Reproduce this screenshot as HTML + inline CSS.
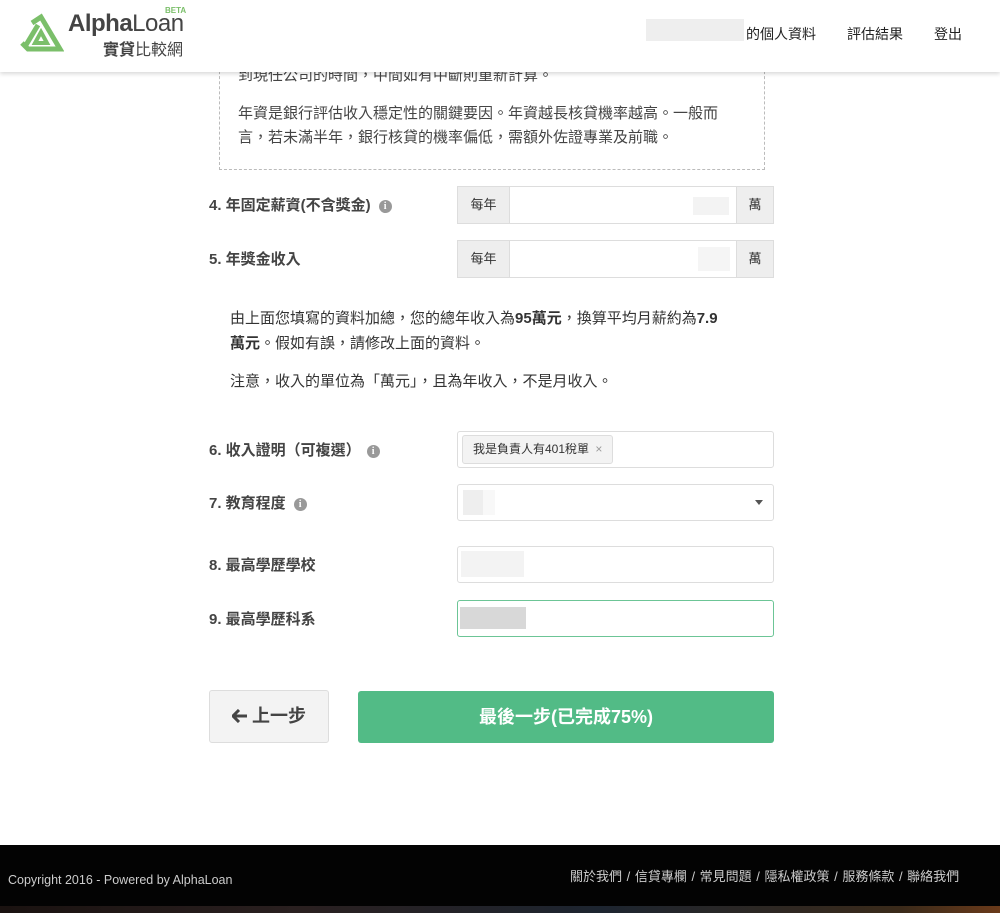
<!DOCTYPE html>
<html><head><meta charset="utf-8"><style>
*{box-sizing:border-box;margin:0;padding:0}
body{width:1000px;height:913px;position:relative;background:#fff;font-family:"Liberation Sans","Noto Sans CJK TC",sans-serif;color:#333;overflow:hidden}
.abs{position:absolute}
.hdr{left:0;top:0;width:1000px;height:72px;background:#fff;box-shadow:0 2px 4px rgba(0,0,0,.15);z-index:5}
.nav{font-size:14px;color:#222;top:24px}
.box{left:219px;top:56px;width:546px;height:114px;border:1px dashed #bbb;border-top:none;font-size:15px;color:#444;line-height:24px;padding:0 18px}
.lbl{left:209px;font-size:15px;font-weight:bold;color:#444}
.info{display:inline-block;width:13px;height:13px;border-radius:50%;background:#999;color:#fff;font-size:10px;text-align:center;line-height:13px;font-weight:bold;font-family:"Liberation Serif",serif;vertical-align:1px;margin-left:8px}
.ig{left:457px;width:317px;height:38px;border:1px solid #ddd;border-radius:3px;background:#fff}
.add{position:absolute;top:-1px;height:38px;width:53px;background:#eee;border:1px solid #ddd;font-size:13px;text-align:center;line-height:36px;color:#333}
.inp{left:457px;width:317px;height:37px;border:1px solid #ddd;border-radius:3px;background:#fff}
.blur{position:absolute;background:#eee}
.txt{left:230px;font-size:15px;color:#333;line-height:25px}
</style></head><body>
<div class="abs hdr">
 <svg class="abs" style="left:18px;top:13px" width="46" height="40" viewBox="0 0 46 40"><g fill="none" stroke="#7bbf6a" stroke-width="5"><path d="M14 10 L23 4 L42 36 L30 36"/><path d="M4 30 L10 36 L34 36"/><path d="M20 12 L8 32"/><path d="M23 19 L29 30 L17 30 Z" stroke-width="4"/></g></svg>
 <div class="abs" style="left:68px;top:10px;font-size:24px;color:#444;font-weight:bold;letter-spacing:-0.5px">Alpha<span style="font-weight:normal">Loan</span></div>
 <div class="abs" style="left:165px;top:6px;font-size:8px;color:#7bbf6a;font-weight:bold">BETA</div>
 <div class="abs" style="left:103px;top:36px;font-size:16px;color:#444;font-weight:bold">實貸<span style="font-weight:normal">比較網</span></div>
 <div class="abs" style="left:646px;top:19px;width:98px;height:22px;background:#eee"></div>
 <div class="abs nav" style="left:746px">的個人資料</div>
 <div class="abs nav" style="left:847px">評估結果</div>
 <div class="abs nav" style="left:934px">登出</div>
</div>
<div class="abs box"><div style="margin-top:8px">到現任公司的時間，中間如有中斷則重新計算。</div><div style="margin-top:14px">年資是銀行評估收入穩定性的關鍵要因。年資越長核貸機率越高。一般而言，若未滿半年，銀行核貸的機率偏低，需額外佐證專業及前職。</div></div>

<div class="abs lbl" style="top:194px">4. 年固定薪資(不含獎金)<span class="info">i</span></div>
<div class="abs ig" style="top:186px"><div class="add" style="left:-1px">每年</div><div class="blur" style="left:235px;top:10px;width:36px;height:18px;background:#f3f3f3"></div><div class="add" style="right:-1px;width:38px">萬</div></div>
<div class="abs lbl" style="top:248px">5. 年獎金收入</div>
<div class="abs ig" style="top:240px"><div class="add" style="left:-1px">每年</div><div class="blur" style="left:240px;top:6px;width:32px;height:24px;background:#f5f5f5"></div><div class="add" style="right:-1px;width:38px">萬</div></div>

<div class="abs txt" style="top:306px;width:520px">由上面您填寫的資料加總，您的總年收入為<b>95萬元</b>，換算平均月薪約為<b>7.9</b><br><b>萬元</b>。假如有誤，請修改上面的資料。</div>
<div class="abs txt" style="top:369px">注意，收入的單位為「萬元」，且為年收入，不是月收入。</div>

<div class="abs lbl" style="top:439px">6. 收入證明（可複選）<span class="info" style="margin-left:6px">i</span></div>
<div class="abs inp" style="top:431px"><div class="abs" style="left:4px;top:3px;height:29px;padding:0 10px;background:#f3f3f3;border:1px solid #ddd;border-radius:3px;font-size:12px;line-height:27px;color:#333">我是負責人有401稅單 <span style="color:#999;margin-left:3px">×</span></div></div>
<div class="abs lbl" style="top:492px">7. 教育程度<span class="info">i</span></div>
<div class="abs inp" style="top:484px"><div class="blur" style="left:5px;top:5px;width:20px;height:25px;background:#eee"></div><div class="blur" style="left:25px;top:5px;width:12px;height:25px;background:#f8f8f8"></div><div class="abs" style="right:10px;top:15px;border:4px solid transparent;border-top:5px solid #555;border-bottom:none"></div></div>
<div class="abs lbl" style="top:554px">8. 最高學歷學校</div>
<div class="abs inp" style="top:546px"><div class="blur" style="left:3px;top:4px;width:63px;height:26px;background:#f3f3f3"></div></div>
<div class="abs lbl" style="top:608px">9. 最高學歷科系</div>
<div class="abs inp" style="top:600px;border-color:#6cc596"><div class="blur" style="left:2px;top:6px;width:66px;height:22px;background:#d8d8d8"></div></div>

<div class="abs" style="left:209px;top:690px;width:120px;height:53px;background:#f3f3f3;border:1px solid #ddd;border-radius:3px;font-size:18px;font-weight:bold;color:#444;text-align:center;line-height:51px"><svg width="16" height="14" viewBox="0 0 16 14" style="vertical-align:-1px;margin-right:4px"><path d="M7 1 L1 7 L7 13 M1 7 H15" fill="none" stroke="#444" stroke-width="3"/></svg>上一步</div>
<div class="abs" style="left:358px;top:691px;width:416px;height:52px;background:#52bb86;border-radius:3px;font-size:18px;font-weight:bold;color:#fff;text-align:center;line-height:52px">最後一步(已完成75%)</div>

<div class="abs" style="left:0;top:845px;width:1000px;height:68px;background:#030303"></div>
<div class="abs" style="left:0;top:906px;width:1000px;height:7px;background:linear-gradient(90deg,#1a1210,#2a2020 30%,#1d2530 60%,#3a2a1a 90%,#6a3a1a)"></div>
<div class="abs" style="left:8px;top:873px;font-size:12.5px;color:#ccc">Copyright 2016 - Powered by AlphaLoan</div>
<div class="abs" style="left:570px;top:866px;font-size:13px;color:#ccc;word-spacing:1px">關於我們 / 信貸專欄 / 常見問題 / 隱私權政策 / 服務條款 / 聯絡我們</div>
</body></html>
